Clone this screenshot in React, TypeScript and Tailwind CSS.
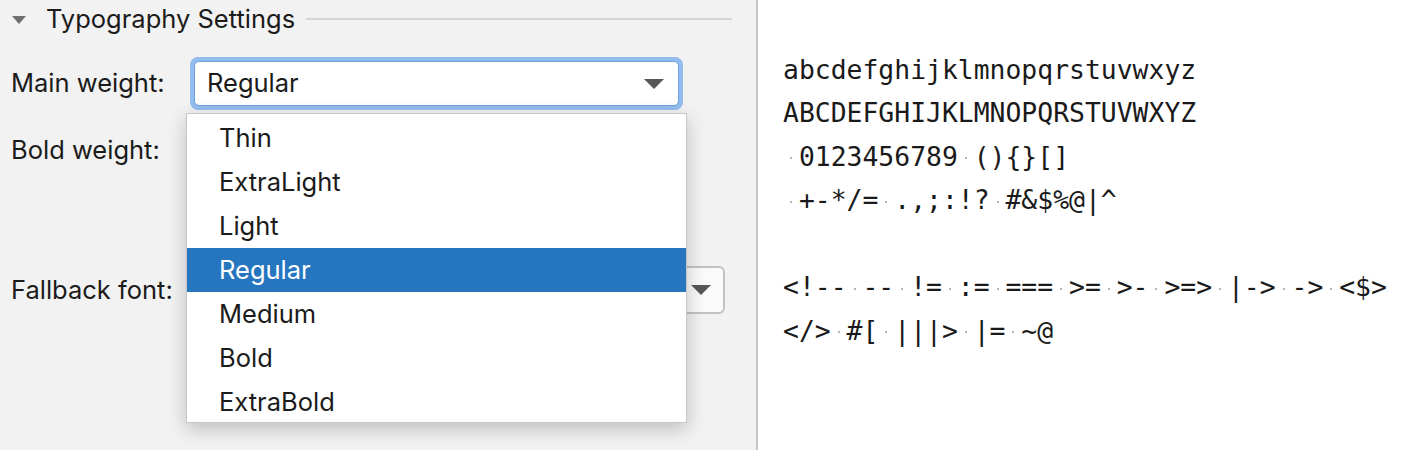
import React from 'react';

const weights = ['Thin', 'ExtraLight', 'Light', 'Regular', 'Medium', 'Bold', 'ExtraBold'];

const previewLines = [
    'abcdefghijklmnopqrstuvwxyz',
    'ABCDEFGHIJKLMNOPQRSTUVWXYZ',
    ' 0123456789 (){}[]',
    ' +-*/= .,;:!? #&$%@|^',
    '',
    '<!-- -- != := === >= >- >=> |-> -> <$>',
    '</> #[ |||> |= ~@',
];

const Arrow = () => (
    <svg width="20" height="10" viewBox="0 0 20 10">
        <path d="M0 0 H20 L10 10 Z" fill="#575757" />
    </svg>
);

// spaces are drawn as small gray dots, like the editor's whitespace markers
const PreviewLine = ({ text }: { text: string }) => (
    <div className="flex items-center h-[43.5px] whitespace-pre">
        {text === '' ? '\u00a0' : text.split('').map((ch, i) =>
            ch === ' ' ? (
                <span key={i} className="flex items-center justify-center w-[15.9px] h-full">
                    <span className="block w-[2px] h-[2px] mt-[3px] bg-[#b4b4b4]" />
                </span>
            ) : (
                <span key={i}>{ch}</span>
            )
        )}
    </div>
);

const App = () => {
    return (
        <div className="flex w-[1414px] h-[450px] overflow-hidden bg-white" style={{ fontFamily: 'Inter, "Noto Sans", sans-serif' }}>
            <div className="relative w-[758px] shrink-0 bg-[#f2f2f2] border-r-2 border-[#c6c6c6] text-[25.5px] text-[#1b1b1b]">
                <div className="flex items-center h-[38px] pl-[12px] pr-[24px]">
                    <svg width="14" height="8" viewBox="0 0 14 8" className="mt-[1px]">
                        <path d="M0 0 H14 L7 8 Z" fill="#707070" />
                    </svg>
                    <span className="ml-[20px] leading-none">Typography Settings</span>
                    <div className="flex-1 h-[2px] bg-[#d6d6d6] ml-[11px]" />
                </div>

                <div className="flex items-center h-[53px] mt-[19px] pl-[11px]">
                    <span className="w-[179px]">Main weight:</span>
                    <div className="w-[493px] h-[53px] rounded-[8px] bg-[#93bdee] p-[4px]">
                        <div className="flex items-center justify-between h-full rounded-[5px] bg-white border border-[#6d9fd9] pl-[12px] pr-[14px]">
                            <span>Regular</span>
                            <Arrow />
                        </div>
                    </div>
                </div>

                <div className="flex items-center h-[40px] mt-[20px] pl-[11px]">
                    <span>Bold weight:</span>
                </div>

                <div className="flex items-center h-[48px] mt-[96px] pl-[11px]">
                    <span className="w-[179px]">Fallback font:</span>
                    <div className="flex items-center justify-end w-[535px] h-[48px] rounded-[6px] border-2 border-[#c2c2c2] bg-[#fafafa] pr-[12px]">
                        <Arrow />
                    </div>
                </div>

                <div className="absolute left-[186px] top-[113px] w-[501px] h-[310px] bg-white border border-[#c8c8c8] pt-[2px] shadow-[0_6px_18px_rgba(0,0,0,0.22)]">
                    {weights.map((w) => (
                        <div
                            key={w}
                            className={
                                w === 'Regular'
                                    ? 'flex items-center h-[44px] pl-[32px] bg-[#2675bf] text-white'
                                    : 'flex items-center h-[44px] pl-[32px] text-[#1b1b1b]'
                            }
                        >
                            {w}
                        </div>
                    ))}
                </div>
            </div>

            <div className="flex-1 pl-[25px] pt-[48px] text-[26.4px] text-[#1a1a1a]" style={{ fontFamily: '"DejaVu Sans Mono", monospace' }}>
                {previewLines.map((line, i) => (
                    <PreviewLine key={i} text={line} />
                ))}
            </div>
        </div>
    );
};

export default App;
